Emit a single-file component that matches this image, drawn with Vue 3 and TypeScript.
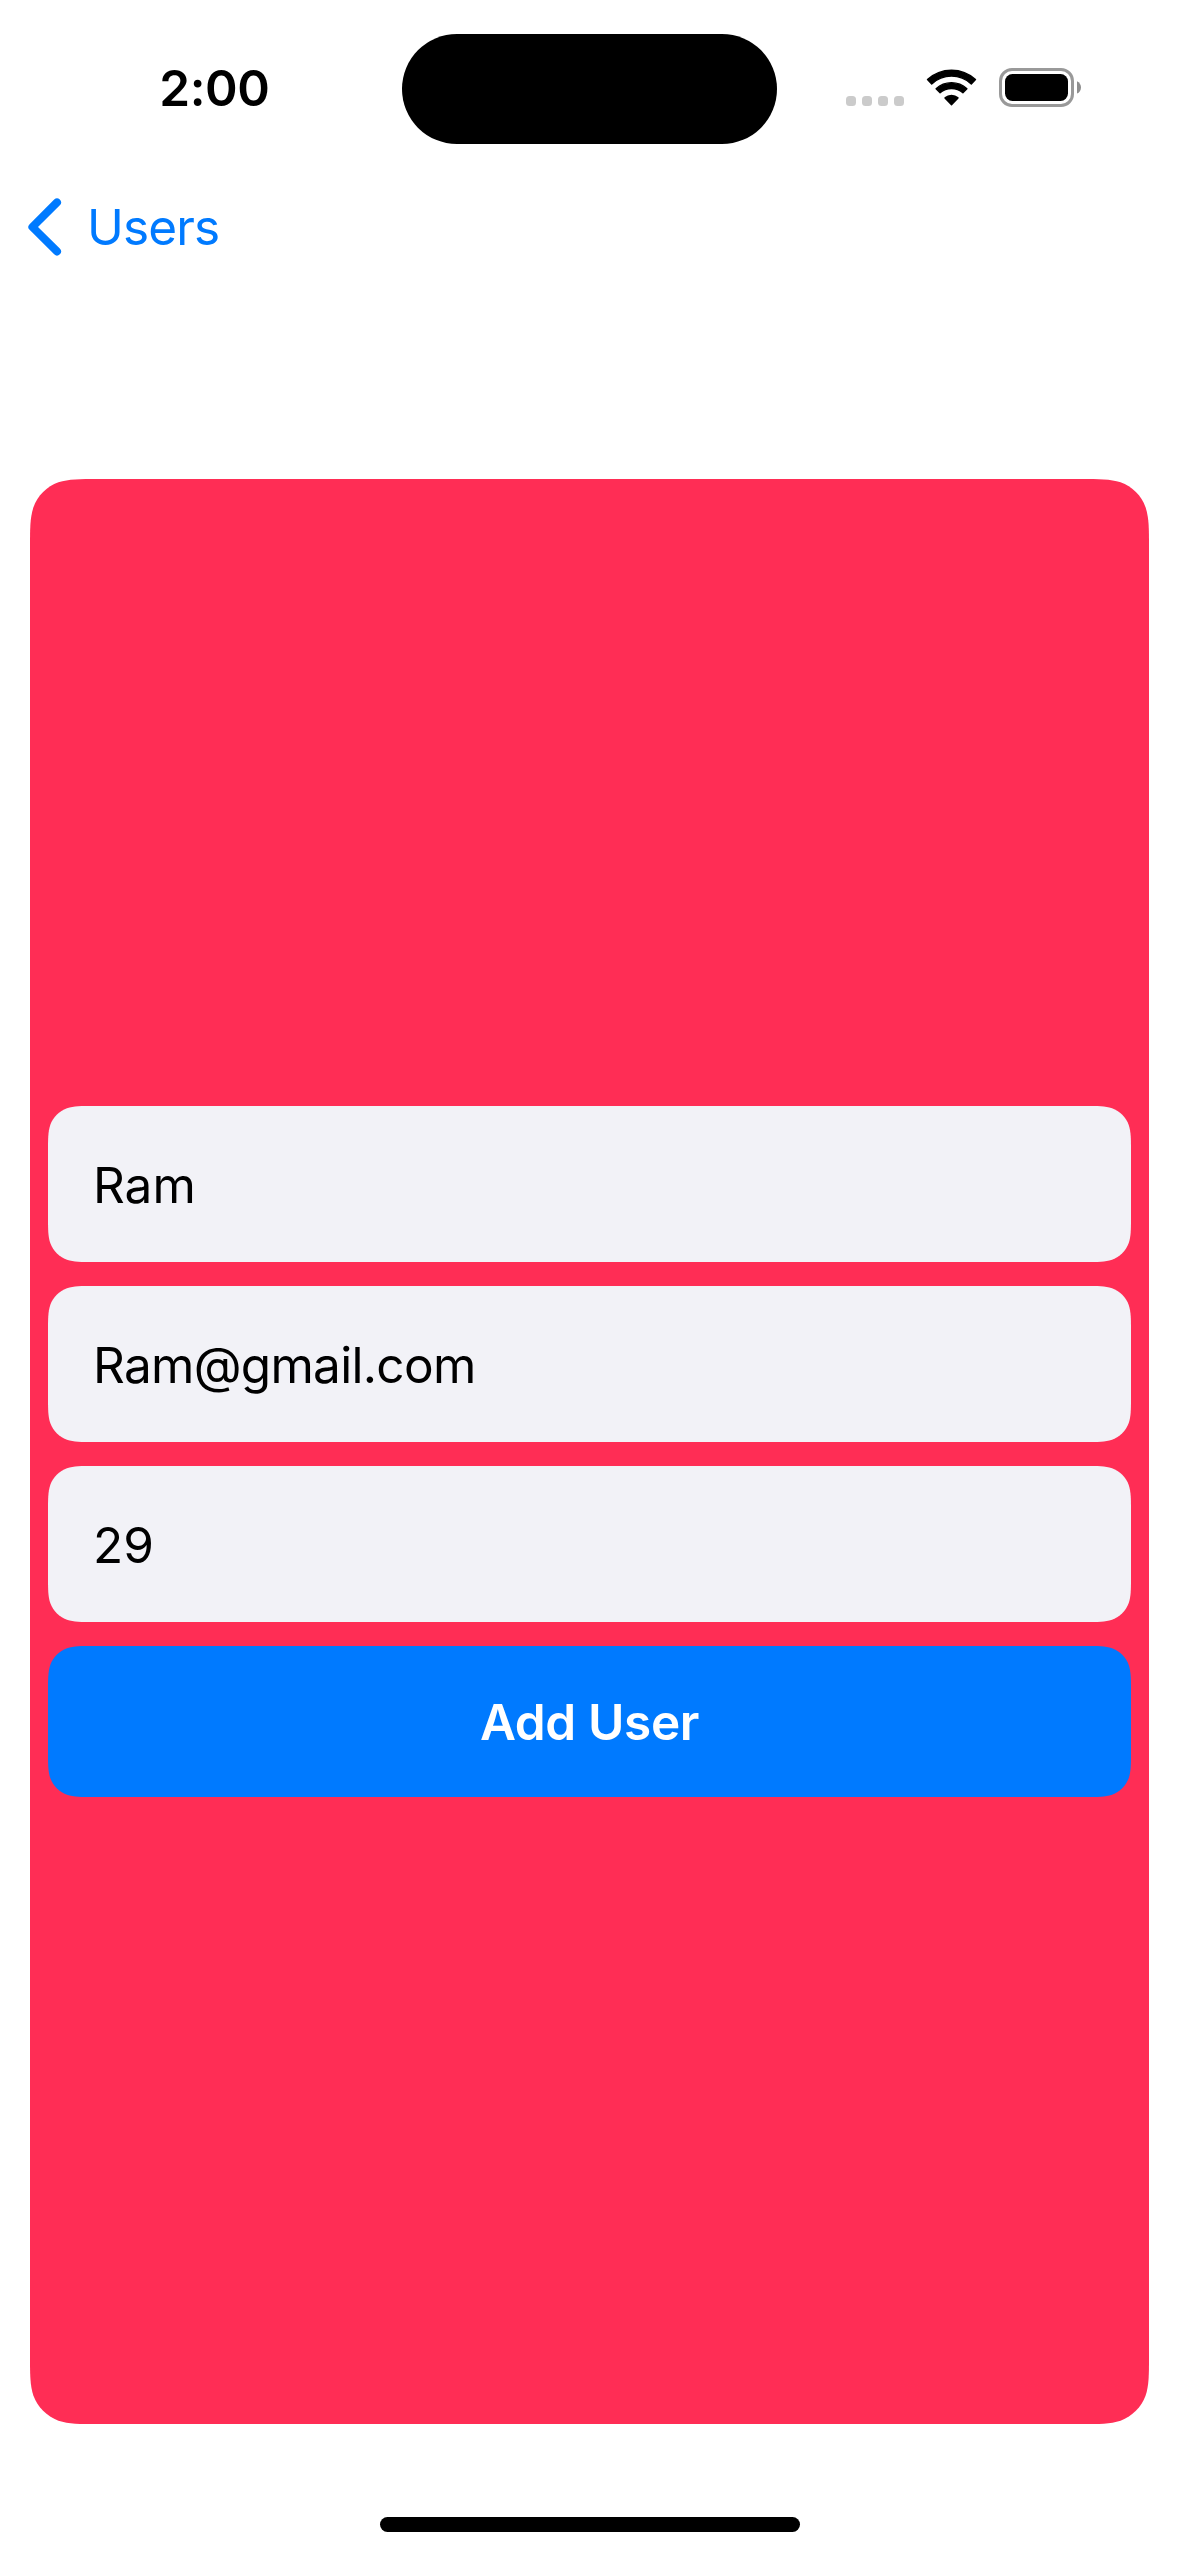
<script setup lang="ts">
interface Field {
  id: string
  value: string
}

const fields: Field[] = [
  { id: 'name', value: 'Ram' },
  { id: 'email', value: 'Ram@gmail.com' },
  { id: 'age', value: '29' },
]

// Rounded rectangle whose corners ease into the edges (continuous curvature).
function continuousRect(w: number, h: number, r: number): string {
  const a = 1.52866 * r
  const b = 1.08849 * r
  const c = 0.86841 * r
  const d = 0.63149 * r
  const e = 0.07491 * r
  const f = 0.37282 * r
  const g = 0.16906 * r
  return [
    `M${a} 0H${w - a}`,
    `C${w - b} 0 ${w - c} 0 ${w - d} ${e}`,
    `C${w - f} ${g} ${w - g} ${f} ${w - e} ${d}`,
    `C${w} ${c} ${w} ${b} ${w} ${a}V${h - a}`,
    `C${w} ${h - b} ${w} ${h - c} ${w - e} ${h - d}`,
    `C${w - g} ${h - f} ${w - f} ${h - g} ${w - d} ${h - e}`,
    `C${w - c} ${h} ${w - b} ${h} ${w - a} ${h}H${a}`,
    `C${b} ${h} ${c} ${h} ${d} ${h - e}`,
    `C${f} ${h - g} ${g} ${h - f} ${e} ${h - d}`,
    `C0 ${h - c} 0 ${h - b} 0 ${h - a}V${a}`,
    `C0 ${b} 0 ${c} ${e} ${d}`,
    `C${g} ${f} ${f} ${g} ${d} ${e}`,
    `C${c} 0 ${b} 0 ${a} 0Z`,
  ].join('')
}

const clip = (w: number, h: number, r: number) => ({
  clipPath: `path('${continuousRect(w, h, r)}')`,
})

const cardClip = clip(1119, 1945, 45)
const fieldClip = clip(1083, 156, 30)
const buttonClip = clip(1083, 151, 30)
</script>

<template>
  <div class="screen">
    <header class="status">
      <div class="side left"><span class="time">2:00</span></div>
      <div class="island"></div>
      <div class="side right">
        <svg class="cell" width="58" height="10" viewBox="0 0 58 10" fill="#cbcbcb">
          <rect x="0" width="10" height="10" rx="3.5" />
          <rect x="16" width="10" height="10" rx="3.5" />
          <rect x="32" width="10" height="10" rx="3.5" />
          <rect x="48" width="10" height="10" rx="3.5" />
        </svg>
        <svg
          class="wifi"
          width="51"
          height="39"
          viewBox="0 0 51 39"
          stroke="#000"
          stroke-width="1.4"
          stroke-linejoin="round"
        >
          <path d="M1.5 11.6A35.4 35.4 0 0 1 49.5 11.6L45.3 15.9A29 29 0 0 0 5.7 15.9Z" />
          <path d="M10.1 20.7A22.6 22.6 0 0 1 40.9 20.7L36.9 24.7A17.6 17.6 0 0 0 14.1 24.7Z" />
          <path d="M19 29.9A10.2 10.2 0 0 1 32 29.9L25.5 36.8Z" />
        </svg>
        <svg class="battery" width="83" height="39" viewBox="0 0 83 39">
          <rect x="1.5" y="1.5" width="72" height="36" rx="11.5" fill="none" stroke="#999" stroke-width="3" />
          <rect x="6" y="6" width="63" height="27" rx="7.5" />
          <path d="M78 13.2C80.4 14.2 82 16.6 82 19.4S80.4 24.6 78 25.6Z" fill="#8e8e8e" />
        </svg>
      </div>
    </header>

    <nav class="nav">
      <svg class="chevron" width="34" height="58" viewBox="0 0 34 58">
        <path
          d="M29 4.4L4.4 29L29 53.4"
          fill="none"
          stroke="#007aff"
          stroke-width="8"
          stroke-linecap="round"
          stroke-linejoin="round"
        />
      </svg>
      <span class="back">Users</span>
    </nav>

    <main class="card" :style="cardClip">
      <div
        v-for="field in fields"
        :key="field.id"
        class="field"
        :class="field.id"
        :style="fieldClip"
      >{{ field.value }}</div>
      <button class="submit" type="button" :style="buttonClip">Add User</button>
    </main>

    <footer class="home"><div class="indicator"></div></footer>
  </div>
</template>

<style>
body {
  margin: 0;
  background: #fff;
}
</style>

<style scoped>
.screen {
  display: flex;
  flex-direction: column;
  width: 1179px;
  height: 2556px;
  overflow: hidden;
  background: #fff;
  color: #000;
  font-family: Inter, 'Liberation Sans', sans-serif;
  font-size: 49.5px;
  line-height: 60px;
}

.status {
  display: flex;
  height: 177px;
  flex: none;
}

.side {
  display: flex;
  flex: 1;
}

.time {
  margin: 58px 0 0 159.3px;
  font-weight: 600;
  letter-spacing: -0.4px;
}

.island {
  width: 375.4px;
  height: 110.6px;
  margin-top: 33.5px;
  border-radius: 55.3px;
  background: #000;
}

.right {
  align-items: flex-start;
}

.cell {
  margin: 96px 0 0 68.8px;
}

.wifi {
  margin: 68px 0 0 22px;
}

.battery {
  margin: 68px 0 0 22px;
}

.nav {
  display: flex;
  height: 302px;
  flex: none;
  padding-left: 28px;
  box-sizing: border-box;
}

.chevron {
  margin-top: 20.6px;
}

.back {
  margin: 20px 0 0 25px;
  color: #007aff;
  letter-spacing: -0.85px;
}

.card {
  display: flex;
  flex-direction: column;
  justify-content: center;
  gap: 24px;
  box-sizing: border-box;
  height: 1945px;
  flex: none;
  margin: 0 30px;
  padding: 0 18px;
  background: #ff2d55;
}

.field {
  box-sizing: border-box;
  height: 156px;
  padding: 49px 45px 47px;
  background: #f2f2f7;
}

.email {
  letter-spacing: -0.7px;
}

.submit {
  height: 151px;
  padding: 46px 0 45px;
  border: 0;
  background: #007aff;
  color: #fff;
  font: inherit;
  font-weight: 600;
  letter-spacing: -0.35px;
}

.home {
  display: flex;
  justify-content: center;
  padding-top: 93px;
}

.indicator {
  width: 420px;
  height: 15px;
  border-radius: 7.5px;
  background: #000;
}
</style>
